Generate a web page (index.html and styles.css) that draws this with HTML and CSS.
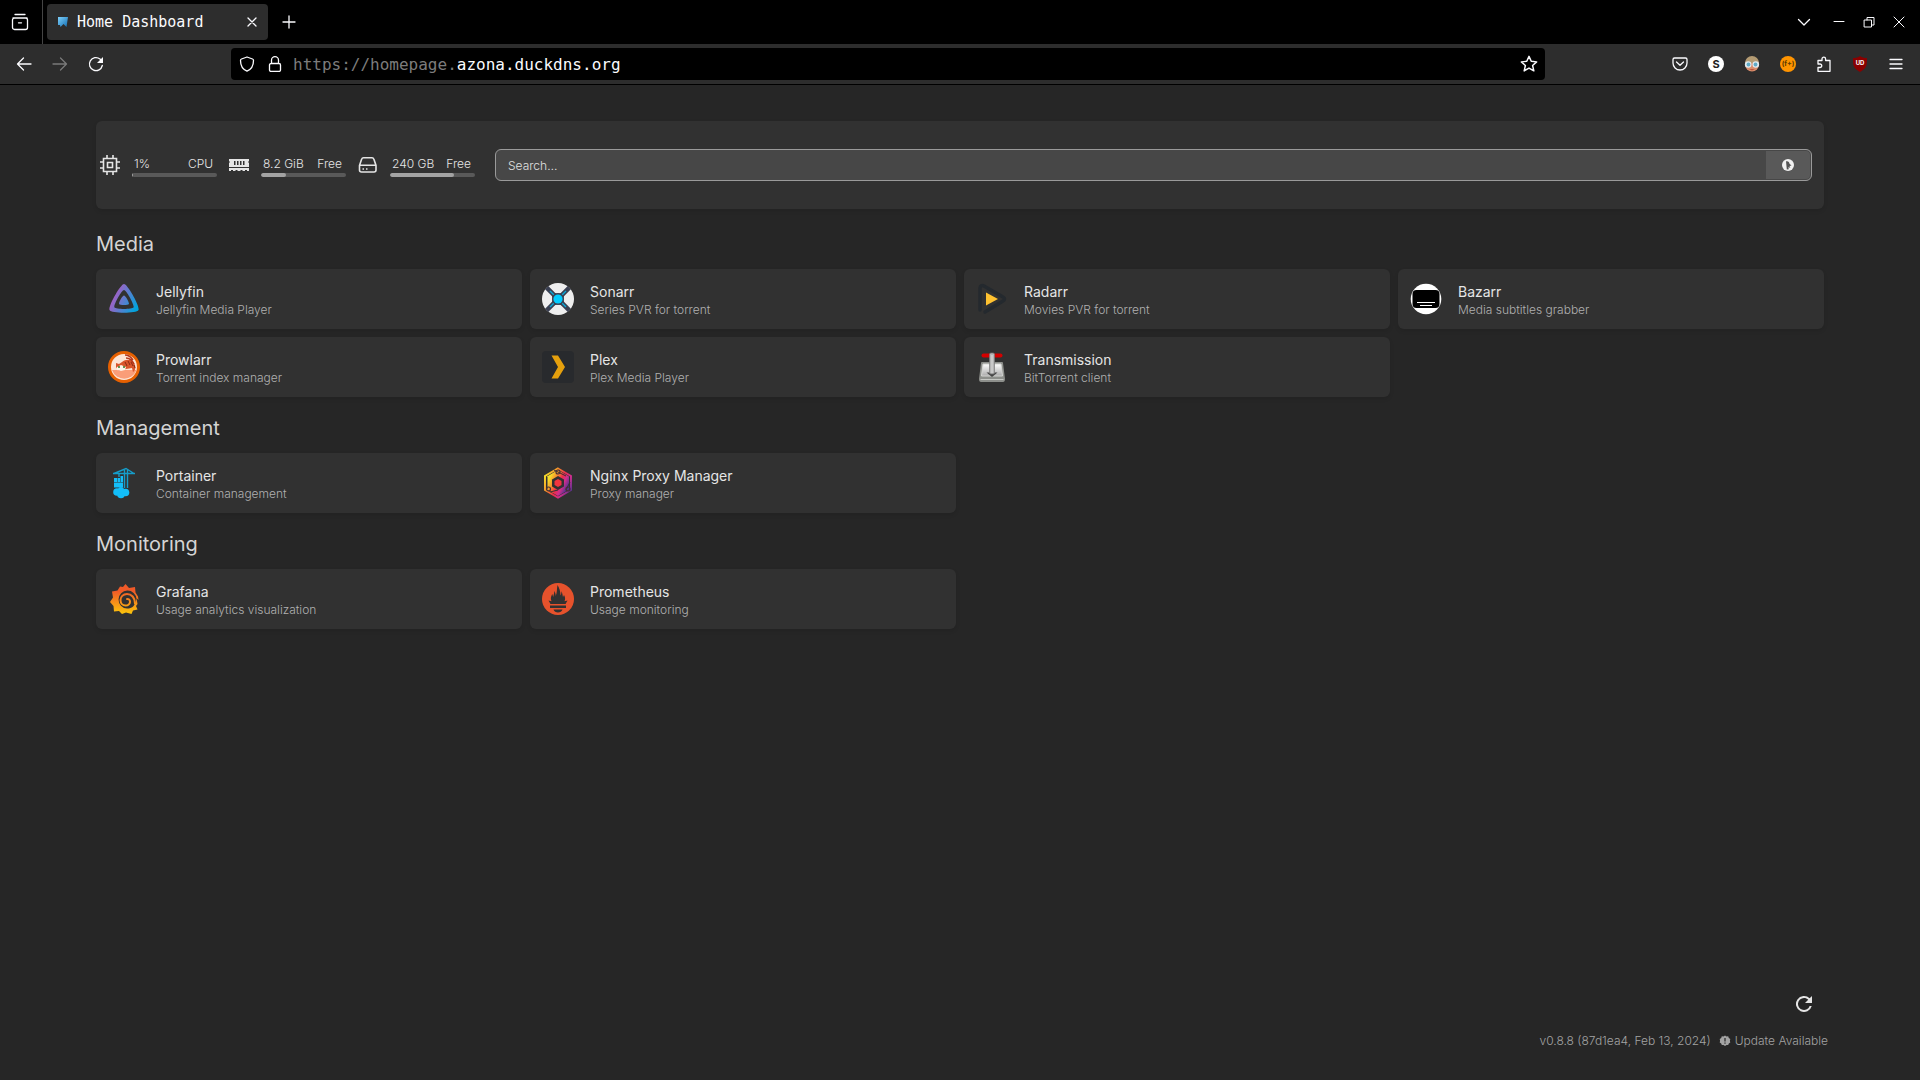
FILE: index.html
```html
<!DOCTYPE html>
<html lang="en">
<head>
<meta charset="utf-8">
<title>Home Dashboard</title>
<link rel="stylesheet" href="styles.css">
</head>
<body>
<header class="browser">
  <div class="tabbar">
    <button class="tool view" aria-label="Recent browsing"><svg width="18" height="18" viewBox="0 0 18 18"><path d="M4 1.500h10M2 5h14M3.500 5h11a2 2 0 0 1 2 2v7.500a2 2 0 0 1-2 2h-11a2 2 0 0 1-2-2V7a2 2 0 0 1 2-2zM7.500 9.800h3"/></svg></button>
    <div class="tab">
      <svg class="favicon" width="10" height="12" viewBox="0 0 10 12"><defs><linearGradient id="fav" x1="0" y1="0" x2="1" y2="1"><stop offset="0" stop-color="#7fd0fa"/><stop offset="1" stop-color="#0f6db3"/></linearGradient></defs><path fill="url(#fav)" d="M0 1h10l-1.500 10L5.500 8 2.500 11 2 9H0z"/></svg>
      <span class="tab-title">Home Dashboard</span>
      <button class="close" aria-label="Close tab"><svg width="10" height="10" viewBox="0 0 10 10"><path d="M1 1l8 8M9 1L1 9"/></svg></button>
    </div>
    <button class="tool" aria-label="New tab"><svg width="14" height="14" viewBox="0 0 14 14"><path d="M7 1v12M1 7h12"/></svg></button>
    <div class="window-controls">
      <button class="tool" aria-label="List all tabs"><svg width="14" height="14" viewBox="0 0 14 14"><path d="M1.500 4.500L7 10l5.500-5.500"/></svg></button>
      <button class="win" aria-label="Minimize"><svg width="12" height="12" viewBox="0 0 12 12"><path d="M1 5.500h10"/></svg></button>
      <button class="win" aria-label="Restore"><svg width="12" height="12" viewBox="0 0 12 12"><path d="M1.500 4h7v7h-7zM4 4V1.500h7V9H8.500"/></svg></button>
      <button class="win" aria-label="Close"><svg width="12" height="12" viewBox="0 0 12 12"><path d="M1 1l10 10M11 1L1 11"/></svg></button>
    </div>
  </div>
  <div class="toolbar">
    <nav class="nav-buttons">
      <button class="tool" aria-label="Back"><svg width="16" height="16" viewBox="0 0 16 16"><path d="M15 8H2M7.500 2L1.500 8l6 6"/></svg></button>
      <button class="tool dim" aria-label="Forward"><svg width="16" height="16" viewBox="0 0 16 16"><path d="M1 8h13M8.500 2l6 6-6 6"/></svg></button>
      <button class="tool" aria-label="Reload"><svg width="16" height="16" viewBox="0 0 16 16"><path d="M14.300 9.500A6.500 6.500 0 1 1 12 3l2 2"/><path class="solid" d="M15 1v6H9z"/></svg></button>
    </nav>
    <div class="urlbar">
      <svg width="16" height="16" viewBox="0 0 16 16"><path d="M8 1l5.500 2c.8.300 1 .7 1 1.500C14.500 9.500 12 13.500 8 15.200 4 13.500 1.500 9.500 1.500 4.500c0-.8.200-1.200 1-1.500z"/></svg>
      <svg width="16" height="16" viewBox="0 0 16 16"><path d="M4.500 7.500V4.200a3.500 3.500 0 0 1 7 0v3.300M4 7.500h8a1.500 1.500 0 0 1 1.500 1.500v5A1.500 1.500 0 0 1 12 15.500H4A1.500 1.500 0 0 1 2.500 14V9A1.500 1.500 0 0 1 4 7.500z"/></svg>
      <span class="url">https://homepage.<b>azona.duckdns.org</b></span>
      <button class="tool star" aria-label="Bookmark"><svg width="18" height="18" viewBox="0 0 16 16"><path d="M8 1.200l2 4.400 4.800.5-3.600 3.200 1.100 4.800L8 11.600l-4.300 2.500 1.100-4.800L1.200 6.100 6 5.600z"/></svg></button>
    </div>
    <div class="extensions">
      <button class="tool" aria-label="Pocket"><svg width="16" height="16" viewBox="0 0 16 16"><path d="M2.500 2h11A1.500 1.500 0 0 1 15 3.500V7A7 7 0 0 1 1 7V3.500A1.500 1.500 0 0 1 2.500 2zM4.500 6L8 9.300 11.500 6"/></svg></button>
      <button class="tool" aria-label="Stylus"><svg width="16" height="16" viewBox="0 0 16 16"><circle class="none" cx="8" cy="8" r="8" fill="#fff"/><text x="8" y="12" class="glyph" fill="#222" font-size="11">S</text></svg></button>
      <button class="tool" aria-label="Assistant"><svg width="16" height="16" viewBox="0 0 16 16"><g class="none"><circle cx="8" cy="8.500" r="7" fill="#d98c6a"/><path fill="#b39a72" d="M1 7a7 7 0 0 1 14 0z"/><circle cx="4.200" cy="8.500" r="3.300" fill="#dfeaf0"/><circle cx="11.800" cy="8.500" r="3.300" fill="#dfeaf0"/><circle cx="4.500" cy="8.500" r="1.900" fill="#5faac6"/><circle cx="11.500" cy="8.500" r="1.900" fill="#5faac6"/><path fill="#b9543f" d="M5 13h6l-3 1.500z"/></g></svg></button>
      <button class="tool" aria-label="Font tool"><svg width="16" height="16" viewBox="0 0 16 16"><circle class="none" cx="8" cy="8" r="8" fill="#ff9400"/><text x="8" y="10" class="glyph" fill="#5c3a00" font-size="7">(f+)</text></svg></button>
      <button class="tool" aria-label="Extensions"><svg width="16" height="16" viewBox="0 0 16 16"><path d="M2 6V4.500h4V3a1.800 1.800 0 0 1 3.600 0v1.500h4.400v10.800H2V11.500h2a1.700 1.700 0 0 0 0-3.500H2z"/></svg></button>
      <button class="tool" aria-label="uBlock Origin"><svg width="16" height="16" viewBox="0 0 16 16"><path class="none" fill="#8a0000" d="M8 0c2 1.500 4 2 7 2 0 7 0 10-7 14C1 12 1 9 1 2c3 0 5-.5 7-2z"/><text x="8" y="9" class="glyph" fill="#fff" font-size="6">UD</text></svg></button>
      <button class="tool" aria-label="Menu"><svg width="14" height="14" viewBox="0 0 14 14"><path d="M1 2.500h12M1 7h12M1 11.500h12"/></svg></button>
    </div>
  </div>
</header>

<main class="page">
  <section class="widgets">
    <div class="resource">
      <svg width="20" height="20" viewBox="0 0 20 20"><path d="M3.500 3.500h13v13h-13zM7.500 7.500h5v5h-5zM7 0v3M13 0v3M7 17v3M13 17v3M0 7h3M0 13h3M17 7h3M17 13h3"/></svg>
      <div class="meter"><div class="labels"><span>1%</span><span>CPU</span></div><div class="track"><div class="fill" style="width:1%"></div></div></div>
    </div>
    <div class="resource">
      <svg width="20" height="20" viewBox="0 0 20 20"><path class="solid" fill-rule="evenodd" d="M0 4h20v2l-1 1 1 1v4H0V8l1-1-1-1zM5 6v4h1.500V6zM8 6v4h1.500V6zM11 6v4h1.500V6zM14 6v4h1.500V6zM0 13h20v3h-2v-1h-2v1h-2.500v-1h-2v1h-3v-1h-2v1H4v-1H2v1H0z"/></svg>
      <div class="meter"><div class="labels"><span>8.2 GiB</span><span>Free</span></div><div class="track"><div class="fill" style="width:29%"></div></div></div>
    </div>
    <div class="resource">
      <svg width="20" height="20" viewBox="0 0 20 20"><path d="M1.500 10.500l2-6c.4-1 1-1.700 2-1.700h8.500c1 0 1.600.7 2 1.700l2 6V15c0 1.200-.8 2-2 2h-12.500c-1.200 0-2-.8-2-2zM1.500 10.300h16.500M4.500 14h1.500M8 14h1.500"/></svg>
      <div class="meter"><div class="labels"><span>240 GB</span><span>Free</span></div><div class="track"><div class="fill" style="width:75%"></div></div></div>
    </div>
    <form class="search">
      <input type="text" placeholder="Search…" aria-label="Search">
      <button type="button" aria-label="Search with DuckDuckGo"><svg width="12" height="12" viewBox="0 0 12 12"><circle cx="6" cy="6" r="6" fill="#f2f2f2"/><path fill="#555" d="M4 2.300c2-.6 3.300.5 3.500 2.500L9.500 6.500 7.500 7l.8 1.800-2-.5.500 2-2 .2z"/></svg></button>
    </form>
  </section>

  <section class="group">
    <h2>Media</h2>
    <div class="cards">
      <a class="card" href="#">
        <svg width="32" height="32" viewBox="0 0 32 32"><defs><linearGradient id="jf" x1="0.100" y1="0.400" x2="0.950" y2="0.800"><stop offset="0" stop-color="#aa5cc3"/><stop offset="1" stop-color="#00a4dc"/></linearGradient></defs><path fill="url(#jf)" fill-rule="evenodd" d="M16 1C12.500 1 0 23.500 1.500 27c1.700 3.600 27.300 3.600 29 0C32.200 23.500 19.500 1 16 1zm0 6c2.300 0 10.700 15 9.600 17.300-1.200 2.300-18 2.300-19.200 0C5.300 22 13.700 7 16 7zM16 12.500c-1.500 0-5.500 7.200-4.900 8.600.6 1.300 9.200 1.300 9.800 0 .6-1.400-3.400-8.600-4.900-8.600z"/></svg>
        <span class="info"><span class="name">Jellyfin</span><span class="desc">Jellyfin Media Player</span></span>
      </a>
      <a class="card" href="#">
        <svg width="32" height="32" viewBox="0 0 32 32"><circle cx="16" cy="16" r="16" fill="#eee"/><path d="M4.700 4.700l22.600 22.600M27.300 4.700L4.700 27.300" stroke="#3a3f51" stroke-width="4.500"/><path fill="#3a3f51" d="M8 8q8 5 16 0-5 8 0 16-8-5-16 0 5-8 0-16z"/><path d="M8 8l4 4M24 8l-4 4M8 24l4-4M24 24l-4-4" stroke="#0aa8d8" stroke-width="1.400"/><circle cx="16" cy="16" r="6" fill="#3a3f51"/><circle cx="16" cy="16" r="4.600" fill="#0cf"/></svg>
        <span class="info"><span class="name">Sonarr</span><span class="desc">Series PVR for torrent</span></span>
      </a>
      <a class="card" href="#">
        <svg width="32" height="32" viewBox="0 0 32 32"><path d="M4 27V5c0-2 2-3 4-2l19 11c2 1 2 3 0 4L9 29" fill="none" stroke="#24292e" stroke-width="3.500" stroke-linecap="round" stroke-linejoin="round"/><path fill="#ffc230" d="M10 9.500v13L22 16z"/></svg>
        <span class="info"><span class="name">Radarr</span><span class="desc">Movies PVR for torrent</span></span>
      </a>
      <a class="card" href="#">
        <svg width="32" height="32" viewBox="0 0 32 32"><circle cx="16" cy="16" r="15.300" fill="#fff"/><rect x="2.500" y="7" width="27" height="18" rx="4" fill="#000"/><path d="M7 19.500h18" stroke="#fff"/><path d="M10 22.500h12" stroke="#fff"/></svg>
        <span class="info"><span class="name">Bazarr</span><span class="desc">Media subtitles grabber</span></span>
      </a>
      <a class="card" href="#">
        <svg width="32" height="32" viewBox="0 0 32 32"><circle cx="16" cy="16" r="14.500" fill="#fde5d6" stroke="#e66001" stroke-width="3"/><path fill="#fa9d78" d="M4 19h24.500A13 13 0 0 1 4 19z"/><path fill="#d9552b" d="M8 12l3 1 3-2c4-3 9-3 12 1 2 3 2 7-1 9l-1-4-6 1-7 2-3-4z"/><path d="M17 4c4 0 6 2 8 5M18 7c4 0 6 2 8 6" stroke="#b5371b" stroke-width="1.500" fill="none"/><path d="M17 11l2 4M20 10l2 4M23 11l2 4M26 14l1 3" stroke="#8a2913" fill="none"/><path fill="#fff4ea" d="M9 16l4-2 5 2-1 3-4 1-4-1z"/><circle cx="11" cy="16" r="1" fill="#372"/><circle cx="16" cy="16" r="1" fill="#372"/></svg>
        <span class="info"><span class="name">Prowlarr</span><span class="desc">Torrent index manager</span></span>
      </a>
      <a class="card" href="#">
        <svg width="32" height="32" viewBox="0 0 32 32"><rect width="32" height="32" rx="4" fill="#282a2d"/><path fill="#e5a00d" d="M9.500 4.500H16L23 16l-7 11.500H9.500L16 16z"/></svg>
        <span class="info"><span class="name">Plex</span><span class="desc">Plex Media Player</span></span>
      </a>
      <a class="card" href="#">
        <svg width="32" height="32" viewBox="0 0 32 32"><defs><linearGradient id="tr" x1="0" y1="0" x2="0" y2="1"><stop offset="0" stop-color="#fff"/><stop offset="1" stop-color="#aaa"/></linearGradient></defs><path fill="#8d8f8b" d="M5 12q0-1 1-1h20q1 0 1 1l2 16q0 3-2 3H5q-2 0-2-3z"/><path fill="url(#tr)" stroke="#d4d5d2" d="M7 13h18l1.500 12h-21z"/><path stroke="#c5c7c3" d="M4.500 28.500h23"/><path fill="#444" d="M10.500 21.500h11L16 26z"/><path d="M7.500 4.500h17" stroke="#d40000" stroke-width="4" stroke-linecap="round"/><rect x="13.500" y="2" width="5" height="21" rx="1.500" fill="#b4b4b4" stroke="#777" stroke-width=".7"/><path d="M16 4v18" stroke="#ddd"/></svg>
        <span class="info"><span class="name">Transmission</span><span class="desc">BitTorrent client</span></span>
      </a>
    </div>
  </section>

  <section class="group">
    <h2>Management</h2>
    <div class="cards">
      <a class="card" href="#">
        <svg width="32" height="32" viewBox="0 0 32 32"><g fill="#13bef9"><path d="M6 11h3v4H6zM9.500 11h2.500v4H9.500zM12.500 9h2.500v6h-2.500zM6 15.500h9v5H6z"/><circle cx="9" cy="25" r="3.800"/><circle cx="13" cy="27.500" r="3.800"/><circle cx="17.500" cy="25.500" r="3.800"/><circle cx="13" cy="23" r="3"/></g><path d="M5 6.500h22M6 6.500l12-5 8 5M11 6v4M16.500 3v18M19.500 3v18" stroke="#159dca" stroke-width="1.400" fill="none"/></svg>
        <span class="info"><span class="name">Portainer</span><span class="desc">Container management</span></span>
      </a>
      <a class="card" href="#">
        <svg width="32" height="32" viewBox="0 0 32 32"><defs><linearGradient id="npm" x1="0" y1="0.200" x2="1" y2="0.800"><stop offset="0" stop-color="#f4e12a"/><stop offset=".3" stop-color="#f58a2b"/><stop offset=".55" stop-color="#ee2c4c"/><stop offset=".75" stop-color="#d22e8c"/><stop offset="1" stop-color="#5b3191"/></linearGradient></defs><path d="M16 1.500L29 9v14l-13 7.500L3 23V9z" fill="none" stroke="url(#npm)" stroke-width="2"/><path d="M16 6l8.500 5v10L16 26l-8.500-5V11z" fill="none" stroke="url(#npm)" stroke-width="5"/><path fill="#f2353f" d="M16 12l3.500 2v4L16 20l-3.500-2v-4z"/><path d="M12 3l12 6M5 10v12M8 25l8-2M24 23l4-8" stroke="#343034"/><g fill="none" stroke="#463035" stroke-width="1.200"><circle cx="16" cy="5" r="2"/><circle cx="6.500" cy="22" r="2"/><circle cx="26" cy="22" r="2"/></g></svg>
        <span class="info"><span class="name">Nginx Proxy Manager</span><span class="desc">Proxy manager</span></span>
      </a>
    </div>
  </section>

  <section class="group">
    <h2>Monitoring</h2>
    <div class="cards">
      <a class="card" href="#">
        <svg width="32" height="32" viewBox="0 0 32 32"><defs><linearGradient id="gf" x1="0" y1="0" x2="0" y2="32" gradientUnits="userSpaceOnUse"><stop offset=".25" stop-color="#f05a28"/><stop offset="1" stop-color="#fbca0a"/></linearGradient></defs><path fill="url(#gf)" d="M17.500 1l3.500 4 6-1 .5 5.500 2.500 4 .5 3.500-2-2 1 6-1.500 2 1.500 3.500-4.500 1-1.500 3.500-5.500-1.500-4 1.500-3-3-5 .5-.5-5.500L2 19l3-4.500L4 8.500l5.500-1L12 3.500l3 .5z"/><path fill="#313131" d="M28.500 16A9 9 0 1 0 19 25.500c4 0 7-2 8-5z"/><path d="M27 20.500c0-6-3.500-9.500-8-9.500-4 0-6.500 3-6.500 6 0 3.500 2.500 5.500 5 5.500 3 0 4.500-2 4.500-3.800s-1.500-3-3-2.700" fill="none" stroke="url(#gf)" stroke-width="2" stroke-linecap="round"/></svg>
        <span class="info"><span class="name">Grafana</span><span class="desc">Usage analytics visualization</span></span>
      </a>
      <a class="card" href="#">
        <svg width="32" height="32" viewBox="0 0 32 32"><circle cx="16" cy="16" r="16" fill="#e6522c"/><path fill="#313131" d="M6.500 17.500l3 .8c-1.300-3-.5-5 .8-7.300l.9 3c.5-2.500 1.300-4 1-6 1 1.300 1.500 3 1.500 5 1.500-3 1-7 1.800-11 1.800 2.500 3 6.500 3 10.500.8-1.500 1-3 .8-4.500 1.500 3 1.200 4.500 1.700 6l1-2c1.200 2.200 1.500 4 .5 6.300l3-.8-2 3.500h-15zM8 22.500h16V25H8zM11.500 26.500h9c-.5 2-2.500 3-4.500 3s-4-1-4.500-3z"/></svg>
        <span class="info"><span class="name">Prometheus</span><span class="desc">Usage monitoring</span></span>
      </a>
    </div>
  </section>

  <footer class="footer">
    <button class="refresh" aria-label="Refresh"><svg width="24" height="24" viewBox="0 0 24 24"><path fill="#e5e5e5" d="M17.650 6.350A8 8 0 1 0 19.730 14h-2.080A6 6 0 1 1 12 6c1.660 0 3.140.69 4.220 1.780L13 11h7V4z"/></svg></button>
    <div class="version">
      <span>v0.8.8 (87d1ea4, Feb 13, 2024)</span>
      <a href="#"><svg width="12" height="12" viewBox="0 0 12 12"><path fill="#a3a3a3" d="M6 0.500l1.500 1 1.700-.2.600 1.600 1.500 1-.4 1.800.4 1.800-1.500 1-.6 1.600-1.700-.2-1.500 1-1.500-1-1.700.2-.6-1.600-1.500-1 .4-1.800-.4-1.800 1.500-1 .6-1.600 1.700.2z"/><path stroke="#262626" stroke-width="1.200" d="M6 3v3.500M6 7.500v1.200"/></svg>Update Available</a>
    </div>
  </footer>
</main>
</body>
</html>
```
FILE: styles.css
```css
* { box-sizing: border-box; }

body {
  margin: 0;
  min-height: 100vh;
  display: flex;
  flex-direction: column;
  background: #262626;
  color: #e5e5e5;
  font-family: Inter, Roboto, sans-serif;
}

button {
  display: flex;
  align-items: center;
  justify-content: center;
  padding: 0;
  border: 0;
  background: none;
  color: inherit;
}

svg { display: block; flex: none; }

/* Browser chrome */
.browser { color: #fbfbfe; }

.browser svg {
  fill: none;
  stroke: currentColor;
  stroke-width: 1.3;
  stroke-linecap: round;
  stroke-linejoin: round;
}

.browser .solid { fill: currentColor; stroke: none; }
.browser .none, .browser .favicon, .browser .glyph { stroke: none; }

.glyph {
  font-family: Inter, sans-serif;
  font-weight: 700;
  text-anchor: middle;
}

.tabbar {
  display: flex;
  align-items: center;
  height: 44px;
  background: #000;
}

.tool { width: 36px; height: 32px; }

.tool.view {
  width: 43px;
  height: 44px;
  padding-right: 2px;
  border-right: 1px solid #444;
}

.tab {
  display: flex;
  align-items: center;
  width: 221px;
  height: 36px;
  margin: 0 3px 0 4px;
  padding: 0 11px;
  gap: 9px;
  border-radius: 4px;
  background: #2d2d2d;
}

.tab-title {
  flex: 1;
  font: 15px "DejaVu Sans Mono", monospace;
  white-space: nowrap;
}

.window-controls {
  display: flex;
  align-items: center;
  margin-left: auto;
  padding-right: 6px;
}

.window-controls .tool { margin-right: 2px; }
.win { width: 30px; height: 30px; }
.window-controls .win svg { stroke-width: 1; }

.toolbar {
  display: flex;
  align-items: center;
  justify-content: space-between;
  height: 41px;
  padding: 0 6px;
  background: #2d2d2d;
  border-bottom: 1px solid #000;
}

.nav-buttons, .extensions { display: flex; }
.nav-buttons { width: 225px; }
.dim { color: #7a7a7a; }

.urlbar {
  display: flex;
  align-items: center;
  flex: 1;
  height: 32px;
  margin-right: 117px;
  padding-left: 8px;
  gap: 12px;
  border-radius: 4px;
  background: #000;
}

.url {
  flex: 1;
  margin-left: -2px;
  color: #7c7c7c;
  font: 16px "DejaVu Sans Mono", monospace;
}

.url b { color: #fbfbfe; font-weight: 400; }
.star { width: 32px; }

/* Dashboard */
.page {
  display: flex;
  flex-direction: column;
  flex: 1;
  padding: 36px 96px 31px;
}

.widgets {
  display: flex;
  align-items: center;
  height: 88px;
  padding: 0 12px 0 4px;
  border-radius: 6px;
  background: #313131;
  box-shadow: 0 2px 4px #0000001a;
}

.resource {
  display: flex;
  align-items: center;
  gap: 12px;
  margin-right: 12px;
}

.resource svg { fill: none; stroke: #e5e5e5; stroke-width: 1.6; }
.resource .solid { fill: #e5e5e5; stroke: none; }

.meter { width: 85px; }

.labels {
  display: flex;
  justify-content: space-between;
  padding: 2px 4px 0 2px;
  font-size: 12px;
  line-height: 16px;
  font-weight: 300;
}

.track {
  height: 4px;
  margin-top: 1px;
  overflow: hidden;
  border-radius: 2px;
  background: #595959;
}

.fill { height: 4px; border-radius: 2px; background: #a3a3a3; }

.search {
  display: flex;
  flex: 1;
  height: 32px;
  margin-left: 8px;
  padding: 1px;
  border: 1px solid #9a9a9a;
  border-radius: 6px;
  background: #474747;
}

.search input {
  flex: 1;
  padding: 0 11px;
  border: 0;
  background: none;
  color: #e5e5e5;
  font: 300 12px Inter, sans-serif;
}

.search input::placeholder { color: #e0e0e0; opacity: 1; }

.search button {
  width: 44px;
  border-radius: 0 4px 4px 0;
  background: #595959;
}

.group h2 {
  margin: 0;
  padding: 21px 0 11px;
  color: #d4d4d4;
  font-size: 20px;
  line-height: 28px;
  font-weight: 400;
}

.group + .group h2 { padding-top: 17px; }

.cards {
  display: grid;
  grid-template-columns: repeat(4, 1fr);
  gap: 8px;
}

.card {
  display: flex;
  align-items: center;
  gap: 16px;
  height: 60px;
  padding: 0 12px;
  border-radius: 6px;
  background: #313131;
  box-shadow: 0 2px 4px #0000001a;
  color: #e5e5e5;
  text-decoration: none;
}

.info { display: flex; flex-direction: column; padding-top: 2px; }
.name { font-size: 14px; line-height: 20px; }
.desc { color: #b0b0b0; font-size: 12px; line-height: 16px; font-weight: 300; }

.footer {
  display: flex;
  flex-direction: column;
  align-items: flex-end;
  gap: 17px;
  margin-top: auto;
}

.refresh { margin-right: 8px; }

.version {
  display: flex;
  gap: 8px;
  margin-right: -4px;
  color: #a3a3a3;
  font-size: 12px;
  line-height: 16px;
  font-weight: 300;
}

.version a {
  display: flex;
  align-items: center;
  gap: 4px;
  color: inherit;
  text-decoration: none;
}
```
